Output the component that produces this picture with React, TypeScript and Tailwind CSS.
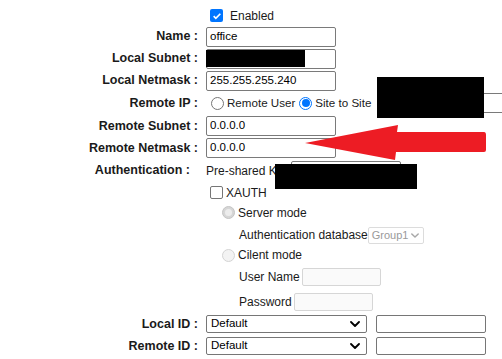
import React from 'react';

const Chevron: React.FC<{ className?: string }> = ({ className }) => (
  <svg viewBox="0 0 10 6" className={className} fill="none" stroke="currentColor" strokeWidth="1.8" strokeLinecap="round" strokeLinejoin="round">
    <path d="M1 1l4 4 4-4" />
  </svg>
);

const Row: React.FC<{ label?: string; h: string; labelClass?: string; children?: React.ReactNode }> = ({ label, h, labelClass = 'pr-[8px]', children }) => (
  <div className={`flex items-center ${h}`}>
    <div className={`w-[206px] shrink-0 text-right font-bold text-[12.5px] text-[#1a1a1a] ${labelClass}`}>{label ? `${label} :` : ''}</div>
    <div className="flex items-center flex-1 min-w-0 whitespace-nowrap">{children}</div>
  </div>
);

const TextBox: React.FC<{ value?: string; w?: string }> = ({ value = '', w = 'w-[130px]' }) => (
  <div className={`${w} shrink-0 h-[20px] border border-[#7a7a7a] rounded-[2px] bg-white px-[3px] flex items-center text-[11.5px] text-black`}>{value}</div>
);

const Radio: React.FC<{ checked?: boolean; disabled?: boolean }> = ({ checked, disabled }) => {
  if (disabled) {
    return (
      <div className={`w-[13px] h-[13px] shrink-0 rounded-full border ${checked ? 'border-[#c5c5c5] bg-[#d6d6d6]' : 'border-[#d4d4d4] bg-[#f3f3f3]'} flex items-center justify-center`}>
        {checked && <div className="w-[7px] h-[7px] rounded-full bg-[#ececec]" />}
      </div>
    );
  }
  return checked ? (
    <div className="w-[13px] h-[13px] shrink-0 rounded-full border-[1px] border-[#0075ff] bg-white flex items-center justify-center">
      <div className="w-[8px] h-[8px] rounded-full bg-[#0075ff]" />
    </div>
  ) : (
    <div className="w-[13px] h-[13px] shrink-0 rounded-full border border-[#767676] bg-white" />
  );
};

const SelectBox: React.FC<{ value: string }> = ({ value }) => (
  <div className="w-[161px] shrink-0 h-[18px] border border-[#767676] rounded-[2px] bg-white pl-[4px] pr-[6px] flex items-center justify-between text-[11.5px] text-black">
    <span>{value}</span>
    <Chevron className="w-[10px] h-[6px] text-black" />
  </div>
);

export default function App() {
  return (
    <div className="relative w-[502px] h-[359px] overflow-hidden bg-white font-['Liberation_Sans',Arial,sans-serif] text-[12px] text-[#1a1a1a]">
      <div className="pt-[5px]">
        <Row h="h-[21px]">
          <div className="ml-[4px] w-[13px] h-[13px] rounded-[2px] bg-[#0075ff] flex items-center justify-center">
            <svg viewBox="0 0 12 12" className="w-[10px] h-[10px]" fill="none" stroke="white" strokeWidth="2">
              <path d="M2 6.2l2.6 2.6L10 3.3" />
            </svg>
          </div>
          <span className="ml-[7px]">Enabled</span>
        </Row>
        <Row label="Name" h="h-[21px]">
          <TextBox value="office" />
        </Row>
        <Row label="Local Subnet" h="h-[23px]">
          <TextBox />
        </Row>
        <Row label="Local Netmask" h="h-[21px]">
          <TextBox value="255.255.255.240" />
        </Row>
        <Row label="Remote IP" h="h-[24px]">
          <div className="ml-[5px]"><Radio /></div>
          <span className="ml-[3px] text-[11.6px]">Remote User</span>
          <div className="ml-[4px]"><Radio checked /></div>
          <span className="ml-[3px] text-[11.6px]">Site to Site</span>
          <div className="ml-[8px] shrink-0"><TextBox w="w-[130px]" /></div>
        </Row>
        <Row label="Remote Subnet" h="h-[22px]">
          <TextBox value="0.0.0.0" />
        </Row>
        <Row label="Remote Netmask" h="h-[22px]">
          <TextBox value="0.0.0.0" />
        </Row>
        <Row label="Authentication" h="h-[23px]" labelClass="pr-[16px]">
          <span>Pre-shared Key</span>
          <div className="ml-[2px] shrink-0"><TextBox w="w-[110px]" /></div>
        </Row>
        <Row h="h-[21px]">
          <div className="ml-[4px] w-[13px] h-[13px] rounded-[2px] border border-[#767676] bg-white" />
          <span className="ml-[3px]">XAUTH</span>
        </Row>
        <Row h="h-[19px]">
          <div className="ml-[16px]"><Radio checked disabled /></div>
          <span className="ml-[3px]">Server mode</span>
        </Row>
        <Row h="h-[26px]">
          <span className="ml-[33px]">Authentication database</span>
          <div className="ml-[0px] w-[56px] h-[17px] border border-[#dcdcdc] rounded-[2px] pl-[3px] pr-[4px] flex items-center justify-between text-[11px] text-[#9a9a9a]">
            <span>Group1</span>
            <Chevron className="w-[8px] h-[5px] text-[#a8a8a8]" />
          </div>
        </Row>
        <Row h="h-[14px]">
          <div className="ml-[16px]"><Radio disabled /></div>
          <span className="ml-[3px]">Cilent mode</span>
        </Row>
        <Row h="h-[30px]">
          <span className="ml-[33px]">User Name</span>
          <div className="ml-[2px] w-[79px] h-[18px] border border-[#d6d6d6] rounded-[2px] bg-[#fafafa]" />
        </Row>
        <Row h="h-[20px]">
          <span className="ml-[33px]">Password</span>
          <div className="ml-[2px] w-[79px] h-[18px] border border-[#d6d6d6] rounded-[2px] bg-[#fafafa]" />
        </Row>
        <Row label="Local ID" h="h-[24px]">
          <SelectBox value="Default" />
          <div className="ml-[9px] w-[110px] h-[18px] border border-[#767676] rounded-[2px] bg-white" />
        </Row>
        <Row label="Remote ID" h="h-[20px]">
          <SelectBox value="Default" />
          <div className="ml-[9px] w-[110px] h-[18px] border border-[#767676] rounded-[2px] bg-white" />
        </Row>
      </div>

      {/* redactions */}
      <div className="absolute left-[206px] top-[50px] w-[99px] h-[17px] bg-black" />
      <div className="absolute left-[377px] top-[77px] w-[107px] h-[41px] bg-black" />
      <div className="absolute left-[275px] top-[164px] w-[142px] h-[25px] bg-black" />

      {/* arrow */}
      <svg className="absolute left-0 top-0 w-[502px] h-[359px] pointer-events-none" viewBox="0 0 502 359">
        <path d="M305 143 L398 125 L397 132 L484 132 Q486 132 486 135 L486 150 Q486 152 484 152 L396 152 L395 160 Z" fill="#ed1c24" />
      </svg>
    </div>
  );
}
